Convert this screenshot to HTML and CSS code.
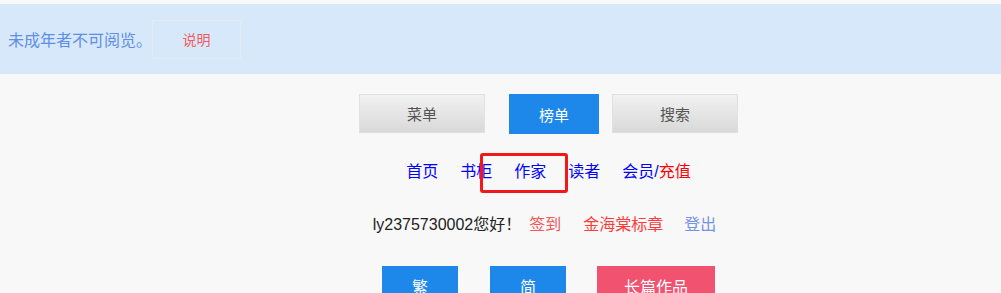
FILE: index.html
```html
<!DOCTYPE html>
<html lang="zh-CN">
<head>
<meta charset="utf-8">
<title>菜单</title>
<link rel="stylesheet" href="styles.css">
</head>
<body>
<div class="notice">
  <span class="notice-text">未成年者不可阅览。</span>
  <span class="notice-btn">说明</span>
</div>
<div class="main">
  <div class="tabs">
    <span class="tab gray">菜单</span>
    <span class="tab blue">榜单</span>
    <span class="tab gray">搜索</span>
  </div>
  <div class="nav">
    <a class="nav-link">首页</a>
    <a class="nav-link">书柜</a>
    <a class="nav-link">作家</a>
    <a class="nav-link">读者</a>
    <a class="nav-link">会员/<span class="red">充值</span></a>
  </div>
  <div class="user">
    <span class="user-name">ly2375730002您好！</span>
    <a class="user-sign">签到</a>
    <a class="user-badge">金海棠标章</a>
    <a class="user-out">登出</a>
  </div>
  <div class="bottom">
    <span class="bbtn blue small">繁</span>
    <span class="bbtn blue small">简</span>
    <span class="bbtn pink wide">长篇作品</span>
  </div>
</div>
<div class="highlight"></div>
</body>
</html>
```
FILE: styles.css
```css
html, body {
  margin: 0;
  padding: 0;
  height: 100%;
  overflow: hidden;
}
body {
  background: #f8f8f8;
  font-family: "Liberation Sans", "Noto Sans CJK SC", sans-serif;
  font-size: 16px;
  position: relative;
}
.notice {
  margin-top: 4px;
  height: 70px;
  background: #d8e8fb;
  display: flex;
  align-items: center;
  padding-left: 8px;
}
.notice-text {
  color: #5e8fe4;
  font-size: 16px;
}
.notice-btn {
  box-sizing: border-box;
  width: 89px;
  height: 39px;
  border: 1px solid #e6e9ee;
  color: #f25b5b;
  font-size: 14px;
  display: flex;
  align-items: center;
  justify-content: center;
}
.main {
  padding-left: 96px;
  display: flex;
  flex-direction: column;
  align-items: center;
}
.tabs {
  margin-top: 20px;
  display: flex;
  align-items: flex-start;
}
.tab {
  box-sizing: border-box;
  height: 39px;
  display: flex;
  align-items: center;
  justify-content: center;
  font-size: 15px;
}
.tab.gray {
  width: 126px;
  border: 1px solid #e0e0e0;
  background: linear-gradient(#f1f1f1, #d9d9d9);
  color: #555;
}
.tab.blue {
  width: 90px;
  height: 40px;
  background: #1e88ea;
  color: #fff;
  margin: 0 13px 0 24px;
}
.nav {
  margin-top: 26px;
  display: flex;
  gap: 22px;
  line-height: 24px;
  height: 24px;
}
.nav-link {
  color: #0000ff;
  text-decoration: none;
}
.red {
  color: #ff0000;
}
.user {
  margin-top: 29px;
  display: flex;
  line-height: 24px;
  height: 24px;
  margin-left: -8px;
}
.user-name {
  color: #222;
}
.user-sign {
  color: #f25656;
  margin-left: 8px;
}
.user-badge {
  color: #ff3a3a;
  margin-left: 22px;
}
.user-out {
  color: #7592e6;
  margin-left: 21px;
}
.bottom {
  margin-top: 29px;
  display: flex;
  gap: 32px;
}
.bbtn {
  height: 40px;
  display: flex;
  align-items: center;
  justify-content: center;
  color: #fff;
  font-size: 16px;
}
.bbtn.small {
  width: 76px;
}
.bbtn.wide {
  width: 118px;
  margin-left: -1px;
}
.bbtn.blue {
  background: #1e88ea;
}
.bbtn.pink {
  background: #f05270;
}
.highlight {
  position: absolute;
  left: 480px;
  top: 153px;
  width: 88px;
  height: 40px;
  box-sizing: border-box;
  border: 3px solid #f01818;
  border-radius: 3px;
}
```
